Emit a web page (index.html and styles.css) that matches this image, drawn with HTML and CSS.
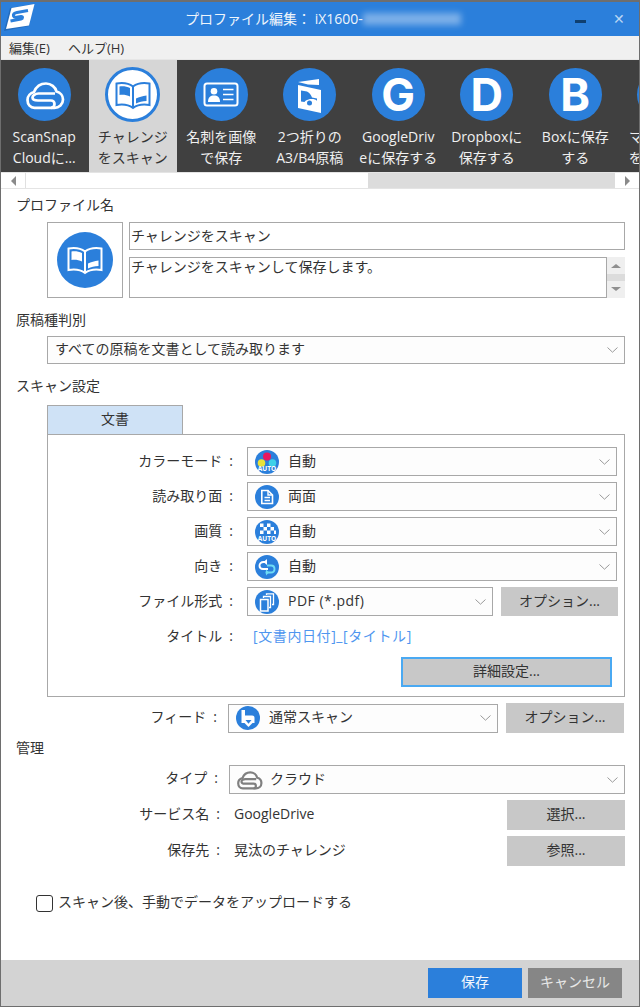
FILE: index.html
```html
<!DOCTYPE html>
<html lang="ja">
<head>
<meta charset="utf-8">
<title>プロファイル編集</title>
<link rel="stylesheet" href="styles.css">
</head>
<body>
<svg class="sprite" aria-hidden="true">
  <symbol id="i-cloud" viewBox="0 0 52 52">
    <path class="cloud-line" d="M9.500 31C9.500 27 12.500 24 16 23C18 18 22.500 14.500 28 14.500C33 14.500 37.500 18 38.500 22.500C42.500 23.500 45 27 45 30.500C45 35.500 41 38.800 36.500 38.800H16.500C12.500 38.800 9.500 35.500 9.500 31Z"/>
    <path class="cloud-line" d="M37 24.500H20.500C17 24.500 14.500 26.800 14.500 28.500C14.500 30.500 17 31.500 20 31.500H33C35 31.500 36.500 33 36.500 35C36.500 37 35 38.800 33 38.800"/>
  </symbol>
  <symbol id="i-book" viewBox="0 0 52 52">
    <path d="M9.500 14.500C15 13.500 22 14.500 26 17.500C30 14.500 37 13.500 42.500 14.500V36C37 35 30 36 26 39C22 36 15 35 9.500 36Z" fill="none" stroke="currentColor" stroke-width="2"/>
    <path d="M26 17.500V39" stroke="currentColor" stroke-width="2"/>
    <path d="M12.500 17.500C16 17 20 17.500 23 19V27.500C20 26 16 25.500 12.500 26Z" fill="currentColor"/>
    <path d="M29 29.500C32 28 35.500 27 39.500 26.500V32C35.500 32 32 33 29 34.500Z" fill="currentColor"/>
  </symbol>
  <symbol id="i-card" viewBox="0 0 52 52">
    <rect x="9.500" y="14.500" width="33" height="22" rx="2.500" fill="none" stroke="currentColor" stroke-width="2"/>
    <circle cx="19" cy="22.300" r="3.300" fill="currentColor"/>
    <path d="M13 33C13 28 15.500 26.500 19 26.500C22.500 26.500 25 28 25 33Z" fill="currentColor"/>
    <path d="M28 20.500H38.500M28 25.500H38.500M28 30.500H38.500" stroke="currentColor" stroke-width="1.600"/>
  </symbol>
  <symbol id="i-fold" viewBox="0 0 52 52">
    <path d="M14 13L35 10V16L24 15.500Z" fill="currentColor"/>
    <path d="M14 16L37 21V44L14 39Z" fill="currentColor"/>
    <path d="M17 21.500L23 22.500C26 24 27 26 28 28.500L33 29.500V32C32 30 27 29.500 24.500 30.500C22.500 31 21 32 20.500 33L17 32.500Z" fill="#2b7fdb"/>
    <circle cx="25.500" cy="34" r="2.500" fill="#2b7fdb"/>
  </symbol>
  <symbol id="i-color" viewBox="0 0 24 24">
    <circle cx="12" cy="12" r="12" fill="#2b7fdb"/>
    <circle cx="6.500" cy="13" r="3.800" fill="#e8e23a"/>
    <circle cx="17.500" cy="13" r="3.800" fill="#3ed1e8"/>
    <circle cx="12" cy="6.500" r="4" fill="#e8175f"/>
  </symbol>
  <symbol id="i-side" viewBox="0 0 24 24">
    <circle cx="12" cy="12" r="12" fill="#2b7fdb"/>
    <path d="M6.800 5.500H13L17.500 10V18.500H6.800Z" fill="none" stroke="#fff" stroke-width="1.600"/>
    <path d="M13 5.500V10H17.500M9.500 12.500H15M9.500 15.500H15" fill="none" stroke="#fff" stroke-width="1.400"/>
  </symbol>
  <symbol id="i-quality" viewBox="0 0 24 24">
    <circle cx="12" cy="12" r="12" fill="#2b7fdb"/>
    <path d="M5 3.500h3.500V7H5zM12 3.500h3.500V7H12zM8.500 7H12v3.500H8.500zM15.500 7H19v3.500h-3.500zM5 10.500h3.500V14H5zM12 10.500h3.500V14H12zM19 10.500h2V14h-2z" fill="#fff"/>
  </symbol>
  <symbol id="i-rotate" viewBox="0 0 24 24">
    <circle cx="12" cy="12" r="12" fill="#2b7fdb"/>
    <path d="M12 7H8.500C6 7 4.500 8.700 4.500 10.800C4.500 13 6 14 8 14H13" fill="none" stroke="#fff" stroke-width="1.900"/>
    <path d="M12 4L8.500 7L12 10Z" fill="#fff"/>
    <path d="M12 10.500H16C18.300 10.500 19.500 12 19.500 14C19.500 16.200 18 17.500 16 17.500H10.500" fill="none" stroke="#6fdcf5" stroke-width="1.900"/>
    <path d="M11 14.500L14 17.500L11 20.500Z" fill="#6fdcf5"/>
  </symbol>
  <symbol id="i-file" viewBox="0 0 24 24">
    <circle cx="12" cy="12" r="12" fill="#2b7fdb"/>
    <path d="M5.500 9.500H13V21H5.500Z" fill="none" stroke="#fff" stroke-width="1.500"/>
    <path d="M8.500 8V6.500H15.500V17.500H14M11.500 5V3.800H18.500V14.500H17" fill="none" stroke="#fff" stroke-width="1.300"/>
  </symbol>
  <symbol id="i-feed" viewBox="0 0 24 24">
    <circle cx="12" cy="12" r="12" fill="#2b7fdb"/>
    <path d="M5.500 4H9V9.500H16C18 9.500 18.500 10.500 18.500 12V17H16.500L12.500 21L8.500 17H5.500Z" fill="#fff"/>
    <path d="M9.500 14H15.500L12.500 17.800Z" fill="#2b7fdb"/>
  </symbol>
  <symbol id="i-chev" viewBox="0 0 11 6">
    <path d="M.5.500L5.500 5.200L10.500.500" fill="none" stroke="currentColor" stroke-width="1"/>
  </symbol>
</svg>

<div class="window">
  <header class="titlebar">
    <svg class="logo" viewBox="0 0 34 34">
      <path d="M9 8L33 4L28 26L3 31Z" fill="#1c5da6" opacity=".6"/>
      <path d="M10.500 8L33.500 4L28 25.500L5 29Z" fill="#fff"/>
      <path d="M27 10.500L16 12.500C13 13 12 14.500 12.500 16C13 17.500 15 17.500 17 17L20 16.500C22 16.200 22 18.500 20 19L9.500 21" fill="none" stroke="#2b7fdb" stroke-width="3"/>
    </svg>
    <div class="title-text">プロファイル編集： iX1600-<span class="title-blur"></span></div>
    <span class="minimize"></span>
    <span class="close">✕</span>
  </header>

  <nav class="menubar">
    <span>編集(E)</span>
    <span>ヘルプ(H)</span>
  </nav>

  <div class="toolbar">
    <div class="tool">
      <span class="disc"><svg class="disc-icon"><use href="#i-cloud"/></svg></span>
      <span class="tool-label">ScanSnap<br>Cloudに…</span>
    </div>
    <div class="tool tool-active">
      <span class="disc"><svg class="disc-icon"><use href="#i-book"/></svg></span>
      <span class="tool-label">チャレンジ<br>をスキャン</span>
    </div>
    <div class="tool">
      <span class="disc"><svg class="disc-icon"><use href="#i-card"/></svg></span>
      <span class="tool-label">名刺を画像<br>で保存</span>
    </div>
    <div class="tool">
      <span class="disc"><svg class="disc-icon"><use href="#i-fold"/></svg></span>
      <span class="tool-label">2つ折りの<br>A3/B4原稿</span>
    </div>
    <div class="tool">
      <span class="disc disc-letter">G</span>
      <span class="tool-label">GoogleDriv<br>eに保存する</span>
    </div>
    <div class="tool">
      <span class="disc disc-letter">D</span>
      <span class="tool-label">Dropboxに<br>保存する</span>
    </div>
    <div class="tool">
      <span class="disc disc-letter">B</span>
      <span class="tool-label">Boxに保存<br>する</span>
    </div>
    <div class="tool">
      <span class="disc"></span>
      <span class="tool-label">マニュアル<br>をスキャン</span>
    </div>
  </div>

  <div class="hscroll">
    <span class="hscroll-btn"><i class="arrow-left"></i></span>
    <span class="hscroll-thumb"></span>
    <span class="hscroll-track"></span>
    <span class="hscroll-btn hscroll-btn-right"><i class="arrow-right"></i></span>
  </div>

  <main class="content">
    <h2 class="section section-first">プロファイル名</h2>
    <div class="profile">
      <div class="profile-icon">
        <span class="disc disc-profile"><svg class="disc-icon"><use href="#i-book"/></svg></span>
      </div>
      <div class="profile-fields">
        <div class="field field-name">チャレンジをスキャン</div>
        <div class="desc">
          <div class="field field-desc">チャレンジをスキャンして保存します。</div>
          <div class="vscroll">
            <i class="arrow-up"></i>
            <i class="vscroll-thumb"></i>
            <i class="arrow-down"></i>
          </div>
        </div>
      </div>
    </div>

    <h2 class="section">原稿種判別</h2>
    <div class="select select-doc">
      <span class="select-text">すべての原稿を文書として読み取ります</span>
      <svg class="chev"><use href="#i-chev"/></svg>
    </div>

    <h2 class="section">スキャン設定</h2>
    <div class="tab">文書</div>
    <section class="panel">
      <div class="row">
        <span class="label">カラーモード<b>:</b></span>
        <div class="select grow"><svg class="s-icon" viewBox="0 0 24 24"><use href="#i-color"/><text x="12" y="21" class="auto-text">AUTO</text></svg><span>自動</span><svg class="chev"><use href="#i-chev"/></svg></div>
      </div>
      <div class="row">
        <span class="label">読み取り面<b>:</b></span>
        <div class="select grow"><svg class="s-icon"><use href="#i-side"/></svg><span>両面</span><svg class="chev"><use href="#i-chev"/></svg></div>
      </div>
      <div class="row">
        <span class="label">画質<b>:</b></span>
        <div class="select grow"><svg class="s-icon" viewBox="0 0 24 24"><use href="#i-quality"/><text x="12" y="21" class="auto-text">AUTO</text></svg><span>自動</span><svg class="chev"><use href="#i-chev"/></svg></div>
      </div>
      <div class="row">
        <span class="label">向き<b>:</b></span>
        <div class="select grow"><svg class="s-icon"><use href="#i-rotate"/></svg><span>自動</span><svg class="chev"><use href="#i-chev"/></svg></div>
      </div>
      <div class="row">
        <span class="label">ファイル形式<b>:</b></span>
        <div class="select grow"><svg class="s-icon"><use href="#i-file"/></svg><span class="pdf">PDF (*.pdf)</span><svg class="chev"><use href="#i-chev"/></svg></div>
        <button class="btn btn-option">オプション...</button>
      </div>
      <div class="row row-title">
        <span class="label label-title">タイトル<b>:</b></span>
        <a class="title-link">[文書内日付]_[タイトル]</a>
      </div>
      <div class="row-detail">
        <button class="btn btn-detail">詳細設定...</button>
      </div>
    </section>

    <div class="row-feed">
      <span class="label">フィード<b>:</b></span>
      <div class="select grow"><svg class="s-icon"><use href="#i-feed"/></svg><span>通常スキャン</span><svg class="chev"><use href="#i-chev"/></svg></div>
      <button class="btn btn-wide">オプション...</button>
    </div>

    <h2 class="section section-manage">管理</h2>
    <div class="row-type">
      <span class="label">タイプ<b>:</b></span>
      <div class="select grow"><svg class="s-icon s-cloud"><use href="#i-cloud"/></svg><span>クラウド</span><svg class="chev"><use href="#i-chev"/></svg></div>
    </div>
    <div class="row-info">
      <span class="label label-info">サービス名<b>:</b></span>
      <span class="info-value">GoogleDrive</span>
      <button class="btn btn-wide">選択...</button>
    </div>
    <div class="row-info">
      <span class="label label-info">保存先<b>:</b></span>
      <span class="info-value">晃汰のチャレンジ</span>
      <button class="btn btn-wide">参照...</button>
    </div>

    <label class="check">
      <span class="checkbox"></span>
      <span class="check-text">スキャン後、手動でデータをアップロードする</span>
    </label>
  </main>

  <footer class="footer">
    <button class="fbtn fbtn-save">保存</button>
    <button class="fbtn fbtn-cancel">キャンセル</button>
  </footer>
</div>
</body>
</html>
```

FILE: styles.css
```css
* { box-sizing: border-box; }

html, body {
  margin: 0;
  padding: 0;
  background: #fff;
}

body {
  font-family: "Open Sans", "Noto Sans CJK JP", sans-serif;
  font-size: 14px;
  line-height: 20px;
  color: #333;
}

.sprite {
  position: absolute;
  width: 0;
  height: 0;
}

.cloud-line {
  fill: none;
  stroke: currentColor;
  stroke-width: var(--cloud-w, 2.700);
}

.window {
  width: 640px;
  height: 1007px;
  display: flex;
  flex-direction: column;
  border: 1px solid #6e6e6e;
  border-top-width: 2px;
  overflow: hidden;
}

/* title bar */
.titlebar {
  position: relative;
  flex: none;
  height: 34px;
  background: #2b7fdb;
  color: #fff;
  display: flex;
  align-items: center;
}

.logo {
  position: absolute;
  left: 0;
  top: -2px;
  width: 34px;
  height: 34px;
}

.title-text {
  margin-left: 184px;
  font-size: 14px;
  line-height: 30px;
  display: flex;
  align-items: center;
  white-space: pre;
  color: #eef5fc;
}

.title-blur {
  width: 98px;
  height: 12px;
  background: rgba(255, 255, 255, .38);
  filter: blur(3px);
}

.minimize {
  position: absolute;
  left: 574px;
  top: 18px;
  width: 11px;
  height: 3px;
  background: #0f3f70;
}

.close {
  position: absolute;
  left: 612px;
  top: 5px;
  font-size: 14px;
  line-height: 24px;
  font-weight: 700;
  color: #b9d5f3;
  font-family: "DejaVu Sans", sans-serif;
}

/* menu */
.menubar {
  flex: none;
  height: 23px;
  background: #f0f0f0;
  display: flex;
  align-items: center;
  gap: 18px;
  padding-left: 8px;
  font-size: 13px;
  color: #333;
}

/* toolbar */
.toolbar {
  flex: none;
  height: 113px;
  margin-left: -1px;
  background: #404040;
  display: flex;
  border-top: 1px solid #e6e6e6;
  overflow: hidden;
}

.tool {
  flex: none;
  width: 88.500px;
  display: flex;
  flex-direction: column;
  align-items: center;
  padding-top: 8px;
  color: #f0f0f0;
}

.tool-active {
  background: #d6d6d6;
  color: #333;
  padding-top: 7px;
}

.disc {
  flex: none;
  width: 53px;
  height: 53px;
  border-radius: 50%;
  background: #2b7fdb;
  color: #fff;
  display: flex;
  align-items: center;
  justify-content: center;
}

.tool-active .disc {
  width: 55px;
  height: 55px;
  background: #fff;
  border: 3px solid #2b7fdb;
  color: #2b7fdb;
}

.disc-icon {
  width: 52px;
  height: 52px;
  flex: none;
}

.disc-letter {
  font-family: Inter, sans-serif;
  font-size: 45px;
  font-weight: 700;
  line-height: 53px;
}

.tool-label {
  margin-top: 5px;
  font-size: 14px;
  line-height: 21px;
  text-align: center;
  white-space: nowrap;
}

.tool-active .tool-label {
  margin-top: 4px;
}

/* horizontal scrollbar */
.hscroll {
  flex: none;
  height: 17px;
  display: flex;
  background: #dcdcdc;
  border-top: 1px solid #e4e4e4;
  border-bottom: 1px solid #e4e4e4;
}

.hscroll-btn {
  flex: none;
  width: 25px;
  background: #fff;
  display: flex;
  align-items: center;
  justify-content: center;
  border-right: 1px solid #e0e0e0;
}

.hscroll-btn-right {
  width: 24px;
  border-right: 0;
}

.hscroll-thumb {
  flex: none;
  width: 342px;
  background: #fff;
}

.hscroll-track {
  flex: 1;
}

.arrow-left,
.arrow-right,
.arrow-up,
.arrow-down {
  display: block;
  width: 0;
  height: 0;
  border-style: solid;
  border-color: transparent;
}

.arrow-left {
  border-width: 5px 5px 5px 0;
  border-right-color: #8a8a8a;
}

.arrow-right {
  border-width: 5px 0 5px 5px;
  border-left-color: #8a8a8a;
}

/* content */
.content {
  flex: 1;
  min-height: 0;
  padding: 0 14px 0 15px;
  background: #fff;
}

.section {
  margin: 12px 0 0;
  font-size: 14px;
  font-weight: 400;
  line-height: 20px;
  color: #333;
}

.section-first {
  margin-top: 6px;
}

.section-manage {
  margin-top: 5px;
}

.profile {
  display: flex;
  gap: 6px;
  margin: 7px 0 0 31px;
}

.profile-icon {
  flex: none;
  width: 76px;
  height: 76px;
  border: 1px solid #a8a8a8;
  display: flex;
  align-items: center;
  justify-content: center;
}

.disc-profile {
  width: 56px;
  height: 56px;
}

.profile-fields {
  flex: 1;
  display: flex;
  flex-direction: column;
  gap: 7px;
}

.field {
  border: 1px solid #a8a8a8;
  background: #fff;
  padding: 0 1px;
  color: #333;
}

.field-name {
  height: 28px;
  line-height: 25px;
}

.desc {
  display: flex;
  height: 41px;
}

.field-desc {
  flex: 1;
  line-height: 18px;
}

.vscroll {
  flex: none;
  width: 18px;
  background: #efefef;
  display: flex;
  flex-direction: column;
  align-items: center;
  padding-top: 7px;
}

.arrow-up {
  border-width: 0 5px 4px;
  border-bottom-color: #8f8f8f;
}

.arrow-down {
  border-width: 4px 5px 0;
  border-top-color: #8f8f8f;
}

.vscroll-thumb {
  display: block;
  width: 100%;
  height: 7px;
  margin: 6px 0;
  background: #dcdcdc;
}

/* selects */
.select {
  display: flex;
  align-items: center;
  height: 29px;
  padding: 0 6px 0 7px;
  border: 1px solid #a8a8a8;
  background: #fdfdfd;
  color: #333;
  gap: 9px;
}

.select > span {
  padding-bottom: 2px;
}

.select .chev {
  margin-left: auto;
}

.select-doc {
  margin: 6px 0 0 31px;
  height: 28px;
}

.pdf {
  letter-spacing: .5px;
}

.chev {
  flex: none;
  width: 11px;
  height: 6px;
  color: #9a9a9a;
}

.s-icon {
  flex: none;
  width: 24px;
  height: 24px;
}

.s-cloud {
  --cloud-w: 3.400;
  color: #808080;
  width: 34px;
  height: 34px;
  margin: 0 -5px;
}

.auto-text {
  font-family: "Open Sans", sans-serif;
  font-size: 6.500px;
  font-weight: 700;
  fill: #fff;
  text-anchor: middle;
}

.grow {
  flex: 1;
  min-width: 0;
}

/* scan panel */
.tab {
  width: 136px;
  height: 30px;
  margin: 9px 0 -1px 31px;
  background: #cfe2f6;
  border: 1px solid #a8a8a8;
  text-align: center;
  line-height: 26px;
  position: relative;
}

.panel {
  margin-left: 31px;
  height: 263px;
  border: 1px solid #a8a8a8;
  padding: 12px 7px 0 0;
}

.row {
  display: flex;
  align-items: center;
  margin-bottom: 6px;
}

.label {
  flex: none;
  width: 185px;
  margin-right: 14px;
  padding-bottom: 3px;
  text-align: right;
  color: #333;
}

.row .label {
  padding-bottom: 1px;
}

.row .label-title {
  padding-bottom: 3px;
}

.row-feed .label {
  width: 201px;
  margin-right: 11px;
  padding-bottom: 2px;
}

.label b {
  font-weight: 400;
  margin-left: 7px;
}

.btn {
  flex: none;
  border: 0;
  background: #c8c8c8;
  font: inherit;
  color: #333;
  padding: 0 0 2px;
}

.btn-option {
  width: 117px;
  height: 29px;
  margin-left: 8px;
  margin-right: -1px;
}

.row-title {
  margin: 10px 0 0;
  height: 22px;
}

.title-link {
  margin-left: 6px;
  padding-bottom: 3px;
  color: #4f96ef;
  letter-spacing: .6px;
  white-space: nowrap;
}

.row-detail {
  display: flex;
  justify-content: flex-end;
  margin-top: 9px;
  padding-right: 5px;
}

.btn-detail {
  width: 211px;
  height: 30px;
  border: 2px solid #4aa9f2;
}

.row-feed {
  display: flex;
  align-items: center;
  margin-top: 6px;
  padding-right: 1px;
}

.row-type .label {
  width: 202px;
  margin-right: 11px;
}

.btn-wide {
  width: 118px;
  height: 30px;
  margin-left: 8px;
}

.row-type {
  display: flex;
  align-items: center;
  margin-top: 7px;
}

.row-info {
  display: flex;
  align-items: center;
  margin-top: 6px;
}

.label-info {
  width: 204px;
  margin-right: 14px;
}

.info-value {
  flex: 1;
  padding-bottom: 3px;
}

.check {
  display: flex;
  align-items: center;
  gap: 5px;
  margin: 26px 0 0 20px;
  color: #333;
}

.check-text {
  padding-bottom: 2px;
}

.checkbox {
  flex: none;
  width: 17px;
  height: 17px;
  border: 1.500px solid #333;
  border-radius: 3px;
  background: #fff;
}

/* footer */
.footer {
  flex: none;
  height: 46px;
  background: #d3d3d3;
  display: flex;
  justify-content: flex-end;
  align-items: center;
  gap: 6px;
  padding-right: 17px;
}

.fbtn {
  width: 94px;
  height: 30px;
  border: 0;
  padding: 0 0 2px;
  font: inherit;
}

.fbtn-save {
  background: #2b7fdb;
  color: #f2f7fd;
}

.fbtn-cancel {
  background: #868686;
  color: #e8e8e8;
}
```
